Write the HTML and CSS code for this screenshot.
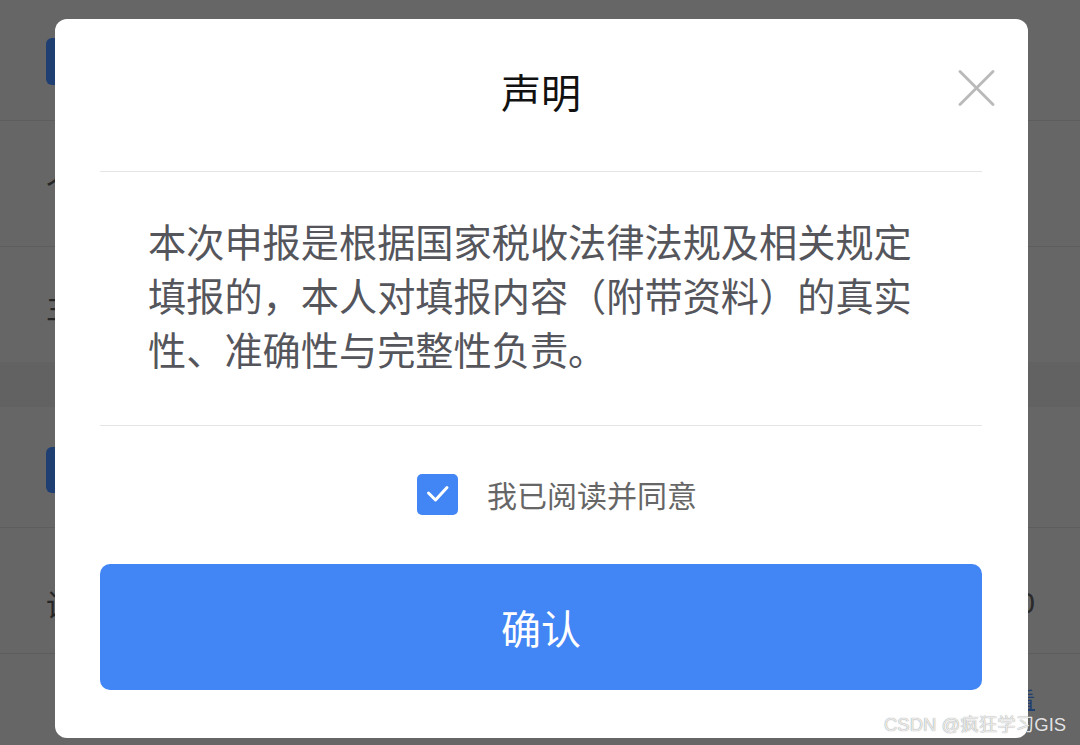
FILE: index.html
```html
<!DOCTYPE html>
<html lang="zh-CN">
<head>
<meta charset="utf-8">
<title>声明</title>
<link rel="stylesheet" href="styles.css">
</head>
<body>
<div class="page">
  <div class="sec">
    <div class="row row-head"><span class="tag"></span></div>
    <div class="row row-2"><span class="lbl">个</span></div>
    <div class="row row-3"><span class="lbl">主</span></div>
  </div>
  <div class="gap"></div>
  <div class="sec">
    <div class="row row-head2"><span class="tag tag2"></span></div>
    <div class="row row-5"><span class="lbl">设</span><span class="num">0.00</span></div>
    <div class="row row-6"><span class="link">查看</span></div>
  </div>
</div>

<div class="modal">
  <div class="head">
    <div class="title">声明</div>
  </div>
  <button class="close" aria-label="关闭">
    <svg width="37" height="36" viewBox="0 0 37 36"><path d="M2 1.5 L35 34.5 M35 1.5 L2 34.5" stroke="#b9b9b9" stroke-width="2.8" stroke-linecap="round" fill="none"/></svg>
  </button>
  <div class="body">本次申报是根据国家税收法律法规及相关规定填报的，本人对填报内容（附带资料）的真实性、准确性与完整性负责。</div>
  <div class="agree">
    <span class="check">
      <svg width="41" height="41" viewBox="0 0 41 41"><path d="M11.5 19 L18.5 26 L30 13.5" stroke="#fff" stroke-width="3" stroke-linecap="round" stroke-linejoin="round" fill="none"/></svg>
    </span>
    <span class="agree-text">我已阅读并同意</span>
  </div>
  <div class="btn">确认</div>
</div>

<div class="watermark">CSDN @疯狂学习GIS</div>
</body>
</html>
```

FILE: styles.css
```css
html, body {
  margin: 0;
  padding: 0;
}
body {
  width: 1080px;
  height: 745px;
  overflow: hidden;
  background: #666666;
  position: relative;
  font-family: "Noto Sans CJK SC", "Noto Sans", sans-serif;
}

/* dimmed page underneath */
.page {
  display: flex;
  flex-direction: column;
}
.row {
  display: flex;
  align-items: center;
  justify-content: space-between;
  padding: 0 45px 0 46px;
  border-bottom: 1px solid #5d5d5d;
  box-sizing: border-box;
}
.row-head {
  height: 121px;
  align-items: flex-start;
}
.row-2 { height: 126px; }
.row-3 { height: 115px; border-bottom: none; }
.gap {
  height: 45px;
  background: #626262;
}
.row-head2 {
  height: 121px;
  align-items: flex-start;
}
.row-5 { height: 126px; padding-top: 24px; }
.row-6 {
  height: 92px;
  border-bottom: none;
  justify-content: flex-end;
  align-items: flex-start;
  padding-top: 33px;
}
.tag {
  display: block;
  width: 30px;
  height: 47px;
  margin-top: 38px;
  border-radius: 6px;
  background: #1f3e72;
}
.tag2 {
  margin-top: 40px;
  height: 46px;
}
.lbl {
  font-size: 30px;
  color: #262626;
  line-height: 1;
}
.num {
  font-family: "Liberation Sans", sans-serif;
  font-size: 30px;
  color: #2a2a2a;
  line-height: 1;
}
.link {
  font-size: 22px;
  line-height: 1;
  color: #1f3e72;
  border-bottom: 2px solid #1f3e72;
}

/* modal */
.modal {
  position: absolute;
  left: 55px;
  top: 19px;
  width: 973px;
  height: 719px;
  box-sizing: border-box;
  padding: 0 46px 47px 45px;
  background: #ffffff;
  border-radius: 12px;
  display: flex;
  flex-direction: column;
}
.head {
  height: 153px;
  padding-bottom: 9px;
  box-sizing: border-box;
  display: flex;
  align-items: center;
  justify-content: center;
  border-bottom: 1px solid #e5e5e5;
  flex-shrink: 0;
}
.title {
  font-size: 40px;
  line-height: 1;
  color: #111111;
  font-weight: 400;
}
.close {
  position: absolute;
  right: 33px;
  top: 51px;
  width: 37px;
  height: 36px;
  padding: 0;
  border: 0;
  background: transparent;
  display: block;
}
.close svg { display: block; }

.body {
  padding: 42px 48px 49px 48px;
  font-size: 38.2px;
  line-height: 54px;
  color: #55555c;
  border-bottom: 1px solid #e5e5e5;
  flex-shrink: 0;
}

.agree {
  height: 138px;
  padding-left: 32px;
  padding-bottom: 2px;
  display: flex;
  align-items: center;
  justify-content: center;
  box-sizing: border-box;
  flex-shrink: 0;
}
.check {
  width: 41px;
  height: 41px;
  border-radius: 5px;
  background: #4285f4;
  display: block;
  flex-shrink: 0;
}
.check svg { display: block; }
.agree-text {
  margin-left: 29px;
  font-size: 30px;
  line-height: 1;
  color: #666666;
}

.btn {
  height: 126px;
  border-radius: 10px;
  background: #4285f4;
  color: #ffffff;
  font-size: 40px;
  display: flex;
  align-items: center;
  justify-content: center;
  flex-shrink: 0;
}

.watermark {
  position: absolute;
  left: 884px;
  top: 714px;
  font-family: "Liberation Sans", "Noto Sans CJK SC", sans-serif;
  font-size: 18.5px;
  line-height: 22px;
  color: rgba(245, 245, 245, 0.9);
  text-shadow: 0 0 1px rgba(90, 90, 90, 0.8);
  white-space: nowrap;
}
```
